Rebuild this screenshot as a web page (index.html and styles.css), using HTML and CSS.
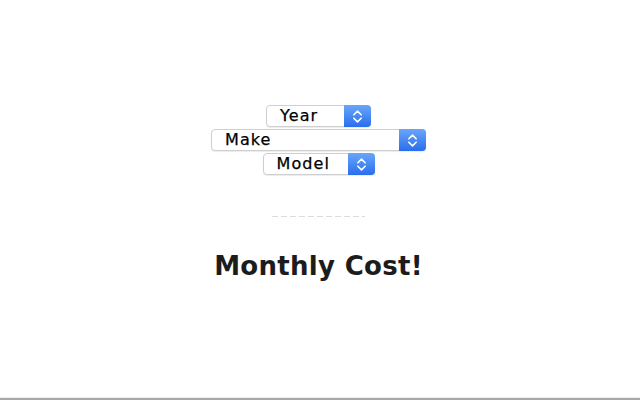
FILE: index.html
```html
<!DOCTYPE html>
<html>
<head>
<meta charset="utf-8">
<link rel="stylesheet" href="styles.css">
</head>
<body>
<main class="page">
  <form class="pickers">
    <div class="select select-year">
      <span class="label">Year</span>
      <span class="stepper"><svg viewBox="0 0 10 14" width="11" height="15"><path d="M1.6 5.4 L5 2 L8.4 5.4 M1.6 8.6 L5 12 L8.4 8.6" fill="none" stroke="#fff" stroke-width="1.5" stroke-linecap="round" stroke-linejoin="round"/></svg></span>
    </div>
    <div class="select select-make">
      <span class="label">Make</span>
      <span class="stepper"><svg viewBox="0 0 10 14" width="11" height="15"><path d="M1.6 5.4 L5 2 L8.4 5.4 M1.6 8.6 L5 12 L8.4 8.6" fill="none" stroke="#fff" stroke-width="1.5" stroke-linecap="round" stroke-linejoin="round"/></svg></span>
    </div>
    <div class="select select-model">
      <span class="label">Model</span>
      <span class="stepper"><svg viewBox="0 0 10 14" width="11" height="15"><path d="M1.6 5.4 L5 2 L8.4 5.4 M1.6 8.6 L5 12 L8.4 8.6" fill="none" stroke="#fff" stroke-width="1.5" stroke-linecap="round" stroke-linejoin="round"/></svg></span>
    </div>
  </form>
  <div class="divider"></div>
  <h1 class="title">Monthly Cost!</h1>
</main>
<footer class="bottom-edge"></footer>
</body>
</html>
```
FILE: styles.css
```css
html, body {
  margin: 0;
  padding: 0;
  height: 100%;
  background: #fff;
}
body {
  display: flex;
  flex-direction: column;
  min-height: 100vh;
  font-family: "DejaVu Sans", "Liberation Sans", sans-serif;
  color: #111;
}
.page {
  flex: 1;
  display: flex;
  flex-direction: column;
  align-items: center;
  padding-top: 105px;
  padding-right: 3px;
}
.pickers {
  display: flex;
  flex-direction: column;
  align-items: center;
  gap: 2px;
  margin: 0;
}
.select {
  box-sizing: border-box;
  height: 22px;
  display: flex;
  align-items: stretch;
  border: 1px solid #cfcfcf;
  border-radius: 4px;
  background: #fff;
  box-shadow: 0 1px 1px rgba(0,0,0,0.08);
}
.select-year { width: 105px; }
.select-make { width: 215px; }
.select-model { width: 112px; }
.label {
  flex: 1;
  padding-left: 13px;
  font-size: 16px;
  letter-spacing: 1.1px;
  line-height: 20px;
  color: #000;
  -webkit-text-stroke: 0.25px #000;
}
.stepper {
  width: 27px;
  margin: -1px -1px -1px 0;
  border-radius: 0 4px 4px 0;
  background: linear-gradient(#69a7fa, #2a6ded);
  display: flex;
  align-items: center;
  justify-content: center;
}
.stepper svg { display: block; }
.divider {
  width: 93px;
  height: 1px;
  margin-top: 41px;
  background: repeating-linear-gradient(to right, #dcdcdc 0 6px, transparent 6px 9px);
}
.title {
  margin: 33px 0 0;
  font-size: 26px;
  line-height: 32px;
  font-weight: bold;
  letter-spacing: 0.3px;
  color: #1c1c1c;
}
.bottom-edge {
  height: 3px;
  border-top: 1px solid #ececec;
  box-sizing: border-box;
  border-bottom: 2px solid #a9a9a9;
}
```
